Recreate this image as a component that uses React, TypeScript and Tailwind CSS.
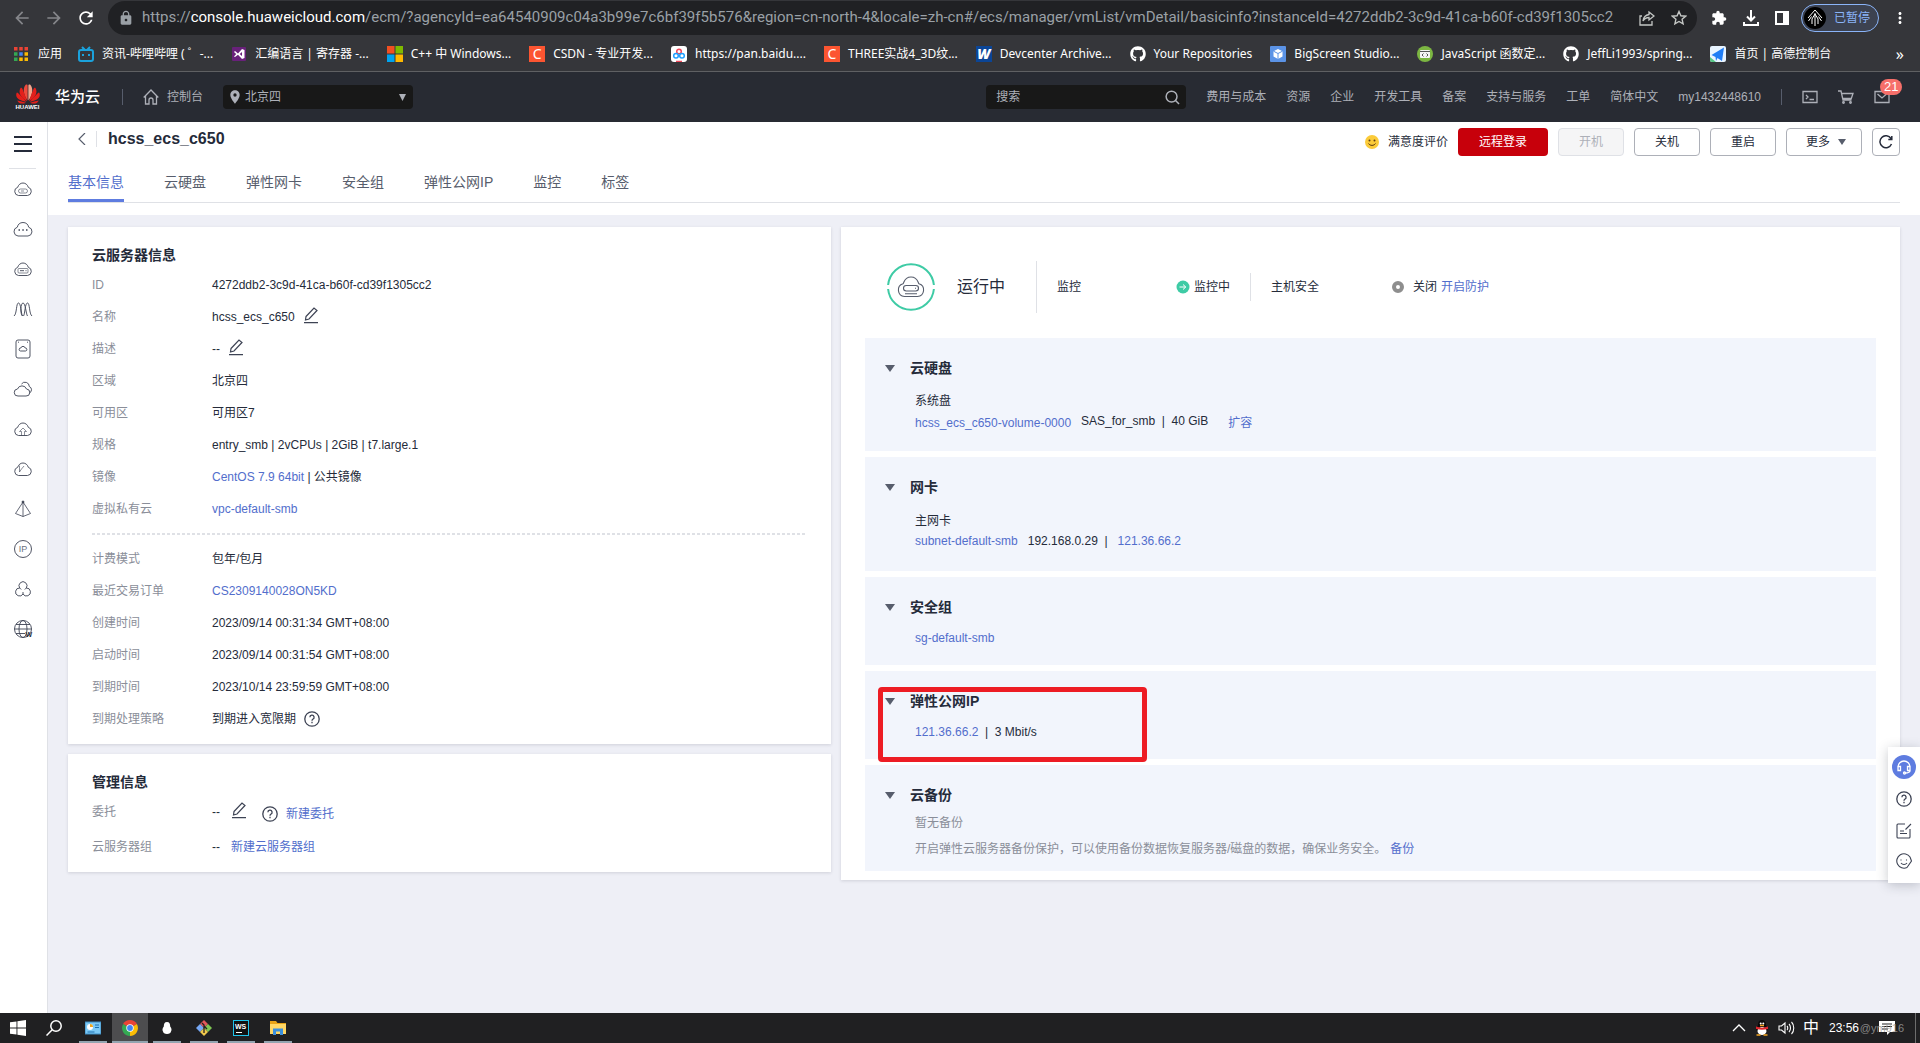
import type { ReactNode } from 'react';
import { FaGithub } from 'react-icons/fa';
import {
  MdArrowBack,
  MdArrowForward,
  MdExtension,
  MdLocationOn,
  MdLock,
  MdMoreVert,
  MdRefresh,
} from 'react-icons/md';

type Bookmark = {
  label: string;
  icon: ReactNode;
};

type InfoRow = {
  label: string;
  value: ReactNode;
};

const TABS = ['基本信息', '云硬盘', '弹性网卡', '安全组', '弹性公网IP', '监控', '标签'];

const TOP_LINKS = [
  '费用与成本',
  '资源',
  '企业',
  '开发工具',
  '备案',
  '支持与服务',
  '工单',
  '简体中文',
];

const CLOUD = 'M5.5 16.500a4.200 4.200 0 0 1-.8-8.200C5.400 5.800 7.500 4 10 4s4.600 1.800 5.300 4.300a4.200 4.200 0 0 1-.8 8.200z';

function Link({ children }: { children: ReactNode }) {
  return (
    <a href="#" className="text-[#526ecc]">
      {children}
    </a>
  );
}

function CsdnIcon() {
  return (
    <span className="flex h-4 w-4 items-center justify-center bg-[#fc5531] text-sm leading-4 text-white">
      C
    </span>
  );
}

const BOOKMARKS: Bookmark[] = [
  {
    label: '资讯-哔哩哔哩 ( ゜-...',
    icon: (
      <svg viewBox="0 0 16 16" className="h-4 w-4" fill="none" stroke="#1ba2dc" strokeWidth="2">
        <rect x="1" y="4" width="14" height="11" rx="2" />
        <path d="M4 1l3 3M12 1L9 4M5 8v2M11 8v2" />
      </svg>
    ),
  },
  {
    label: '汇编语言 | 寄存器 -...',
    icon: (
      <svg viewBox="0 0 16 16" className="h-4 w-4">
        <rect x="1" y="1" width="14" height="14" rx="1" fill="#68217a" />
        <path
          d="M3 6l1-1 3 2.500L11 3l2.500 1v8L11 13 7 8.800 4 11 3 10.500 5.200 8zM11 6L8.700 8 11 10z"
          fill="#fff"
          fillRule="evenodd"
        />
      </svg>
    ),
  },
  {
    label: 'C++ 中 Windows...',
    icon: (
      <svg viewBox="0 0 16 16" className="h-4 w-4">
        <path d="M0 0h7.500v7.500H0z" fill="#f25022" />
        <path d="M8.500 0H16v7.500H8.500z" fill="#7fba00" />
        <path d="M0 8.500h7.500V16H0z" fill="#00a4ef" />
        <path d="M8.500 8.500H16V16H8.500z" fill="#ffb900" />
      </svg>
    ),
  },
  { label: 'CSDN - 专业开发...', icon: <CsdnIcon /> },
  {
    label: 'https://pan.baidu....',
    icon: (
      <svg viewBox="0 0 16 16" className="h-4 w-4" fill="none" strokeWidth="1.5">
        <rect width="16" height="16" rx="3" fill="#fff" />
        <circle cx="8" cy="5.5" r="2.3" stroke="#f0475a" />
        <circle cx="5" cy="9.8" r="2.3" stroke="#1e9fff" />
        <circle cx="11" cy="9.8" r="2.3" stroke="#1e9fff" />
        <path d="M5 15.500h6" stroke="#f0475a" />
      </svg>
    ),
  },
  { label: 'THREE实战4_3D纹...', icon: <CsdnIcon /> },
  {
    label: 'Devcenter Archive...',
    icon: (
      <span className="flex h-4 w-4 items-center justify-center bg-[#0b4596] text-sm leading-4 font-black text-white italic">
        W
      </span>
    ),
  },
  { label: 'Your Repositories', icon: <FaGithub className="h-4 w-4" /> },
  {
    label: 'BigScreen Studio...',
    icon: (
      <svg viewBox="0 0 16 16" className="h-4 w-4">
        <rect width="16" height="16" rx="1" fill="#5b93e6" />
        <path d="M8 3l4.500 2.200v5.300L8 13l-4.500-2.500V5.200z" fill="#fff" />
        <path d="M3.500 5.200L8 7.500l4.500-2.300M8 7.500V13" stroke="#5b93e6" fill="none" />
      </svg>
    ),
  },
  {
    label: 'JavaScript 函数定...',
    icon: (
      <svg viewBox="0 0 16 16" className="h-4 w-4">
        <circle cx="8" cy="8" r="8" fill="#7cb642" />
        <rect x="3" y="4" width="10" height="8" rx="1" fill="#f4f4f4" />
        <path d="M3 5.500h10" stroke="#555" />
        <path d="M6.500 7.500L5 9l1.500 1.500M9.500 7.500L11 9l-1.500 1.500" stroke="#555" fill="none" />
      </svg>
    ),
  },
  { label: 'JeffLi1993/spring...', icon: <FaGithub className="h-4 w-4" /> },
  {
    label: '首页 | 高德控制台',
    icon: (
      <svg viewBox="0 0 16 16" className="h-4 w-4">
        <rect width="16" height="16" rx="2" fill="#e8f4ff" />
        <path d="M0 11l6 5H2a2 2 0 0 1-2-2z" fill="#57c785" />
        <path d="M14 1.500L12 15l-4.500-3L6 15l-.5-4L1.500 9z" fill="#1f7df5" />
      </svg>
    ),
  },
];

function BrowserBar() {
  return (
    <div className="bg-[#35363a] font-['Noto_Sans','Noto_Sans_CJK_SC',sans-serif] text-white">
      <div className="flex h-9 items-center pr-[15px] pl-3">
        <div className="flex w-24 shrink-0 items-center gap-3 text-[20px]">
          <button aria-label="后退" className="text-[#85868a]">
            <MdArrowBack />
          </button>
          <button aria-label="前进" className="text-[#85868a]">
            <MdArrowForward />
          </button>
          <button aria-label="刷新">
            <MdRefresh />
          </button>
        </div>
        <div className="flex h-[34px] min-w-0 flex-1 items-center gap-2 rounded-full bg-[#202124] px-2.5">
          <MdLock className="shrink-0 text-base text-[#9aa0a6]" />
          <p className="min-w-0 flex-1 truncate font-[Roboto] text-[15px] text-[#9aa0a6]">
            https://<span className="text-white">console.huaweicloud.com</span>
            /ecm/?agencyId=ea64540909c04a3b99e7c6bf39f5b576&amp;region=cn-north-4&amp;locale=zh-cn#/ecs/manager/vmList/vmDetail/basicinfo?instanceId=4272ddb2-3c9d-41ca-b60f-cd39f1305cc2
          </p>
          <button aria-label="分享" className="mr-2">
            <svg viewBox="0 0 16 16" className="h-4 w-4" fill="none" stroke="#c4c7c5" strokeWidth="1.3">
              <path d="M3 6H1v9h12v-4M10 2l5 4-5 4V7.500c-3 0-4.500 1-6 3.500.5-4 2.500-6 6-6.500z" />
            </svg>
          </button>
          <button aria-label="收藏">
            <svg viewBox="0 0 16 16" className="h-4 w-4" fill="none" stroke="#c4c7c5" strokeWidth="1.4">
              <path d="M8 1.500l1.900 4.300 4.700.4-3.500 3.100 1 4.600L8 11.500l-4.100 2.400 1-4.600L1.400 6.200l4.700-.4z" />
            </svg>
          </button>
        </div>
        <div className="flex shrink-0 items-center gap-4 pl-3.5">
          <button aria-label="扩展程序" className="text-base">
            <MdExtension />
          </button>
          <button aria-label="下载">
            <svg viewBox="0 0 16 16" className="h-4 w-4" fill="none" stroke="#fff" strokeWidth="2">
              <path d="M8 0v10M4 6.500l4 4 4-4M1 12v3h14v-3" />
            </svg>
          </button>
          <button aria-label="侧边栏">
            <svg viewBox="0 0 14 14" className="h-3.5 w-3.5" fill="#fff">
              <path d="M0 0h14v14H0zM2 2v10h6V2z" fillRule="evenodd" />
            </svg>
          </button>
          <button className="-ml-1 flex h-7 items-center gap-2 rounded-full border border-[#8ab4f8] bg-[#3c4250] pr-2 pl-0.5 text-xs text-[#8ab4f8]">
            <svg viewBox="0 0 22 22" className="h-[22px] w-[22px]" fill="none" stroke="#fff" strokeWidth="1">
              <circle cx="11" cy="11" r="11" fill="#000" stroke="none" />
              <path d="M11 3l7 8M11 3l-7 8M11 6v13M11 7l-3 5v5M11 7l3 5v5M7.500 9.500L4.500 14M14.500 9.500l3 4.500" />
            </svg>
            已暂停
          </button>
          <button aria-label="更多选项" className="-mr-1 -ml-1 text-lg">
            <MdMoreVert />
          </button>
        </div>
      </div>
      <nav className="flex h-9 items-center border-b border-[#5f6063] pr-4 pl-3.5 text-xs whitespace-nowrap">
        <a href="#" className="mr-4 flex items-center gap-2.5">
          <svg viewBox="0 0 14 14" className="h-3.5 w-3.5">
            <path d="M0 0h3.500v3.500H0zM5.250 0h3.500v3.500h-3.500zM10.500 0H14v3.500h-3.500z" fill="#ea4335" />
            <path d="M0 5.250h3.500v3.500H0zM0 10.500h3.500V14H0z" fill="#34a853" />
            <path d="M5.250 5.250h3.500v3.500h-3.500z" fill="#4285f4" />
            <path d="M10.500 5.250H14v3.500h-3.500zM5.250 10.500h3.500V14h-3.500zM10.500 10.500H14V14h-3.500z" fill="#fbbc04" />
          </svg>
          应用
        </a>
        <div className="flex gap-[18px]">
          {BOOKMARKS.map((b) => (
            <a key={b.label} href="#" className="flex items-center gap-2">
              <span className="shrink-0">{b.icon}</span>
              {b.label}
            </a>
          ))}
        </div>
        <button className="ml-auto text-base">»</button>
      </nav>
    </div>
  );
}

function HuaweiLogo() {
  return (
    <svg viewBox="0 0 52 40" className="h-5 w-[26px]" fill="#e3201b">
      <path d="M25.300 33C17 23 15 9 21 2c2-1.500 4.300-1 4.300 2z" fill="#ee4a3c" />
      <path d="M26.700 33C35 23 37 9 31 2c-2-1.500-4.300-1-4.300 2z" fill="#f5a58c" />
      <path d="M24 34.500C11 27 6 17 11 8c1-1.500 3-.5 4 2 3 7 6 15 9 24.500z" />
      <path d="M28 34.500C41 27 46 17 41 8c-1-1.500-3-.5-4 2-3 7-6 15-9 24.500z" />
      <path d="M22.500 35.500C8 33.500 0 27 3 18c.5-1.500 2-1.300 3 0 5 5 11 11 16.500 17.500z" />
      <path d="M29.500 35.500C44 33.500 52 27 49 18c-.5-1.500-2-1.300-3 0-5 5-11 11-16.500 17.500z" />
      <path d="M22 37.500c-7 3-14 2.500-17.500-4.500 6 1.500 12 2.500 17.500 4.500z" />
      <path d="M30 37.500c7 3 14 2.500 17.500-4.500-6 1.500-12 2.500-17.500 4.500z" />
    </svg>
  );
}

function ConsoleHeader() {
  return (
    <header className="flex h-[50px] items-center bg-[#282b33] pr-[30px] pl-3.5 text-xs whitespace-nowrap text-[#adb0b8]">
      <a href="#" className="flex w-[27px] flex-col items-center">
        <HuaweiLogo />
        <span className="text-[6px] leading-[7px] font-bold text-white">HUAWEI</span>
      </a>
      <span className="ml-3.5 text-[15px] font-medium text-white">华为云</span>
      <span className="ml-[22px] h-4 w-px bg-[#575d6c]" />
      <a href="#" className="ml-5 flex items-center gap-2">
        <svg viewBox="0 0 16 16" className="h-4 w-4" fill="none" stroke="#adb0b8" strokeWidth="1.3">
          <path d="M.7 8.500L8 1l7.300 7.500M2.500 7v8H6v-4a2 2 0 0 1 4 0v4h3.500V7" />
        </svg>
        控制台
      </a>
      <div className="relative ml-5 flex h-6 w-[190px] items-center rounded-sm bg-[#181818]">
        <MdLocationOn className="absolute left-1 text-base" />
        <select aria-label="区域" className="h-full w-full appearance-none pl-[22px] outline-none">
          <option>北京四</option>
        </select>
        <svg viewBox="0 0 8 8" className="pointer-events-none absolute right-[7px] h-[7px] w-[7px]" fill="#adb0b8">
          <path d="M0 0h8L4 8z" />
        </svg>
      </div>
      <div className="ml-auto flex h-6 w-[200px] items-center rounded-sm bg-[#181818] pr-1.5 pl-2.5">
        <input
          aria-label="搜索"
          placeholder="搜索"
          className="min-w-0 flex-1 outline-none placeholder:text-[#adb0b8]"
        />
        <svg viewBox="0 0 16 16" className="h-[15px] w-[15px]" fill="none" stroke="#adb0b8" strokeWidth="1.6">
          <circle cx="7" cy="7" r="5.8" />
          <path d="M11 11l4 4" />
        </svg>
      </div>
      <nav className="ml-5 flex items-center gap-5">
        {TOP_LINKS.map((l) => (
          <a key={l} href="#">
            {l}
          </a>
        ))}
        <a href="#">my1432448610</a>
      </nav>
      <span className="ml-5 h-4 w-px bg-[#575d6c]" />
      <div className="ml-5 flex items-center gap-5">
        <button aria-label="命令行">
          <svg viewBox="0 0 16 16" className="h-4 w-4" fill="none" stroke="#adb0b8" strokeWidth="1.3">
            <path d="M1 2.500h14v11H1zM4 6l2 2-2 2M7.500 10.500H12" />
          </svg>
        </button>
        <button aria-label="购物车">
          <svg viewBox="0 0 16 16" className="h-4 w-4" fill="none" stroke="#adb0b8" strokeWidth="1.3">
            <path d="M0 2h3l2 9h8.500M3.700 4.500H15l-1.700 5H5" />
            <circle cx="5.5" cy="13.5" r=".8" />
            <circle cx="12.5" cy="13.5" r=".8" />
          </svg>
        </button>
        <button aria-label="消息" className="relative">
          <svg viewBox="0 0 16 16" className="h-4 w-4" fill="none" stroke="#adb0b8" strokeWidth="1.3">
            <path d="M1 2.500h14v11H1zM3.500 5L8 9l4.500-4" />
          </svg>
          <span className="absolute -top-2.5 left-1.5 rounded-full bg-[#f66f6a] px-1 text-[13px] leading-4 text-white">
            21
          </span>
        </button>
      </div>
    </header>
  );
}

const SIDE_ICONS: ReactNode[] = [
  <>
    <path d={CLOUD} />
    <rect x="5.5" y="10" width="9" height="4" rx="2" strokeWidth=".6" />
    <path d="M8 12h3" strokeWidth=".6" />
  </>,
  <>
    <path d="M5 17a4.500 4.500 0 0 1-.7-8.800A6 6 0 0 1 10 3.500a6 6 0 0 1 5.700 4.700A4.500 4.500 0 0 1 15 17z" />
    <path d="M5.500 11h1.500M9.300 11h1.500M13 11h1.500" strokeWidth="1.5" />
  </>,
  <>
    <path d={CLOUD} />
    <rect x="5" y="9.500" width="10" height="4.500" rx="1" strokeWidth=".6" />
    <path d="M7 11.700h4M12.500 11.700h1" />
  </>,
  <path d="M1 17C4 15 3 4 5.500 4S8 15 9.500 17C7 15 7.500 4 10 4s3 11 4.500 13M19 17c-3-2-2-13-4.500-13S12 15 10.500 17" />,
  <>
    <rect x="3" y="1" width="14" height="18" rx="2" />
    <path d="M7.500 12a1.500 1.500 0 0 1 .3-3 2.300 2.300 0 0 1 4.400 0 1.500 1.500 0 0 1 .3 3zM5 3.200h1M14 3.200h1" />
  </>,
  <>
    <path d="M5 17a3.500 3.500 0 0 1-.5-7 4.800 4.800 0 0 1 9 0 3.500 3.500 0 0 1-.5 7z" />
    <path d="M8.500 5a4.300 4.300 0 0 1 7.800 2.500 3.500 3.500 0 0 1 0 6.500" />
  </>,
  <>
    <path d={CLOUD} />
    <path d="M8.500 16.500v-4h-2L10 9l3.500 3.500h-2v4" strokeWidth=".6" />
  </>,
  <>
    <path d={CLOUD} />
    <path d="M6.500 6.500v6.500l2-3 2.500-3" strokeWidth=".6" />
  </>,
  <>
    <path d="M10 3L2.500 14.500 10 17.500l7.500-3zM10 3v14.500" strokeWidth=".8" />
    <circle cx="10" cy="3" r="1" fill="#3d4354" />
  </>,
  <>
    <circle cx="10" cy="10" r="8.5" />
    <text x="10" y="13" fontSize="9" textAnchor="middle" fill="#6b7080" stroke="none">
      IP
    </text>
  </>,
  <path d="M6.700 9a4 4 0 1 1 6.600 0M6.700 9a4 4 0 1 0 3.300 6 4 4 0 1 0 3.300-6M10 15v-2M8.200 10.500L6.700 9M11.800 10.500l1.500-1.500" />,
  <>
    <circle cx="10" cy="10" r="8.5" />
    <ellipse cx="10" cy="10" rx="4" ry="8.5" />
    <path d="M1.500 10h17M3 5.500h14M3 14.500h9" />
    <text x="12.5" y="18" fontSize="7" fontWeight="700" fill="#252b3a" stroke="none">
      W
    </text>
  </>,
];

function SideNav() {
  return (
    <nav className="flex w-12 shrink-0 flex-col items-center border-r border-[#dfe1e6] bg-white pr-0.5">
      <button aria-label="菜单" className="mt-3.5 flex w-[18px] flex-col gap-[5px]">
        <span className="h-0.5 bg-[#252b3a]" />
        <span className="h-0.5 bg-[#252b3a]" />
        <span className="h-0.5 bg-[#252b3a]" />
      </button>
      <span className="mt-4 mb-2.5 h-px w-[27px] bg-[#dfe1e6]" />
      <div className="flex flex-col gap-5">
        {SIDE_ICONS.map((icon, i) => (
          <a key={i} href="#" aria-label={`服务 ${i + 1}`}>
            <svg viewBox="0 0 20 20" className="h-5 w-5" fill="none" stroke="#3d4354" strokeWidth=".9">
              {icon}
            </svg>
          </a>
        ))}
      </div>
    </nav>
  );
}

const OUTLINE_BUTTON = 'h-7 w-[66px] rounded-sm border border-[#adb0b8] bg-white text-[#252b3a]';

function PageHeader() {
  return (
    <div className="bg-white pb-3 pl-5">
      <div className="flex h-[34px] items-start justify-between pr-5">
        <div className="flex h-full items-center">
          <button aria-label="返回" className="ml-2">
            <svg viewBox="0 0 12 12" className="h-3 w-3" fill="none" stroke="#575d6c" strokeWidth="1.2">
              <path d="M9 0L3 6l6 6" />
            </svg>
          </button>
          <span className="ml-2 h-4 w-px bg-[#dfe1e6]" />
          <h1 className="ml-[11px] text-base font-bold">hcss_ecs_c650</h1>
        </div>
        <div className="flex items-center gap-2.5 pt-1.5">
          <a href="#" className="flex items-center gap-2">
            <svg viewBox="0 0 16 16" className="h-4 w-4">
              <circle cx="8" cy="8" r="7" fill="#fbcb3a" />
              <circle cx="5.5" cy="6.5" r="1" fill="#5d3b12" />
              <circle cx="10.5" cy="6.5" r="1" fill="#5d3b12" />
              <path d="M4.500 9.500c1.500 2.500 5.500 2.500 7 0" stroke="#5d3b12" fill="none" />
            </svg>
            满意度评价
          </a>
          <button className="h-7 w-[90px] rounded-sm bg-[#c7000b] text-white">远程登录</button>
          <button disabled className="h-7 w-[66px] rounded-sm border border-[#dfe1e6] bg-[#f5f5f6] text-[#adb0b8]">
            开机
          </button>
          <button className={OUTLINE_BUTTON}>关机</button>
          <button className={OUTLINE_BUTTON}>重启</button>
          <button className="flex h-7 w-[76px] items-center justify-center gap-2 rounded-sm border border-[#adb0b8] pl-1">
            更多
            <svg viewBox="0 0 8 6" className="h-1.5 w-2" fill="#575d6c">
              <path d="M0 0h8L4 6z" />
            </svg>
          </button>
          <button
            aria-label="刷新"
            className="flex h-7 w-7 items-center justify-center rounded-sm border border-[#adb0b8]"
          >
            <svg viewBox="0 0 14 14" className="h-3.5 w-3.5" fill="none" stroke="#252b3a" strokeWidth="1.5">
              <path d="M12.500 9A6 6 0 1 1 12 3.500M12.800 1v3.500H9.300" />
            </svg>
          </button>
        </div>
      </div>
      <div className="mt-2.5 mr-5 flex gap-10 border-b border-[#dfe1e6] text-sm text-[#575d6c]">
        {TABS.map((tab, i) => (
          <a
            key={tab}
            href="#"
            className={
              i === 0
                ? 'border-b-[3px] border-[#5e7ce0] pt-1 pb-[5px] leading-6 text-[#526ecc]'
                : 'pt-1 pb-[5px] leading-6'
            }
          >
            {tab}
          </a>
        ))}
      </div>
    </div>
  );
}

function EditIcon() {
  return (
    <button aria-label="编辑">
      <svg viewBox="0 0 16 20" className="h-5 w-4" fill="none" stroke="#3d4354" strokeWidth="1.2">
        <path d="M3 9.500L11 1l3 2.500L6 12l-3.500 1zM1 15.700h14" />
      </svg>
    </button>
  );
}

function HelpIcon() {
  return (
    <svg viewBox="0 0 16 16" className="h-4 w-4 shrink-0" fill="none" stroke="#3d4354" strokeWidth="1.3">
      <circle cx="8" cy="8" r="7.2" />
      <path d="M5.900 6.300a2.100 2.100 0 1 1 3 1.900c-.7.400-.9.700-.9 1.500M8 10.800v1.400" />
    </svg>
  );
}

const SERVER_ROWS: InfoRow[] = [
  { label: 'ID', value: '4272ddb2-3c9d-41ca-b60f-cd39f1305cc2' },
  { label: '名称', value: <>hcss_ecs_c650 <EditIcon /></> },
  { label: '描述', value: <>-- <EditIcon /></> },
  { label: '区域', value: '北京四' },
  { label: '可用区', value: '可用区7' },
  { label: '规格', value: 'entry_smb | 2vCPUs | 2GiB | t7.large.1' },
  {
    label: '镜像',
    value: (
      <span>
        <Link>CentOS 7.9 64bit</Link> | 公共镜像
      </span>
    ),
  },
  { label: '虚拟私有云', value: <Link>vpc-default-smb</Link> },
];

const BILLING_ROWS: InfoRow[] = [
  { label: '计费模式', value: '包年/包月' },
  { label: '最近交易订单', value: <Link>CS2309140028ON5KD</Link> },
  { label: '创建时间', value: '2023/09/14 00:31:34 GMT+08:00' },
  { label: '启动时间', value: '2023/09/14 00:31:54 GMT+08:00' },
  { label: '到期时间', value: '2023/10/14 23:59:59 GMT+08:00' },
  { label: '到期处理策略', value: <>到期进入宽限期 <HelpIcon /></> },
];

const MANAGE_ROWS: InfoRow[] = [
  {
    label: '委托',
    value: (
      <>
        -- <EditIcon />
        <span className="ml-1 flex items-center gap-2 pt-1">
          <HelpIcon />
          <Link>新建委托</Link>
        </span>
      </>
    ),
  },
  { label: '云服务器组', value: <>-- <Link>新建云服务器组</Link></> },
];

function InfoList({ rows, loose = false }: { rows: InfoRow[]; loose?: boolean }) {
  return (
    <dl className={loose ? 'flex flex-col gap-[3px]' : 'flex flex-col'}>
      {rows.map((row) => (
        <div key={row.label} className="flex h-8 items-center">
          <dt className="w-[120px] shrink-0 text-[#8a8e99]">{row.label}</dt>
          <dd className={loose ? 'flex items-center gap-[11px]' : 'flex items-center gap-2'}>
            {row.value}
          </dd>
        </div>
      ))}
    </dl>
  );
}

function Section({
  title,
  bodyClass = 'pt-[11px] pb-[17px]',
  children,
}: {
  title: string;
  bodyClass?: string;
  children: ReactNode;
}) {
  return (
    <section className="relative bg-[#f2f5fc] px-5 pt-5">
      <h3 className="flex items-center gap-[15px] text-sm leading-5 font-bold">
        <svg viewBox="0 0 10 7" className="h-[7px] w-2.5" fill="#575d6c">
          <path d="M0 0h10L5 7z" />
        </svg>
        {title}
      </h3>
      <div className={`pl-[30px] leading-5 ${bodyClass}`}>{children}</div>
    </section>
  );
}

function StatusBar() {
  return (
    <div className="flex h-[103px] items-center">
      <svg viewBox="0 0 48 48" className="ml-[22px] h-12 w-12" fill="none" strokeWidth="2">
        <path d="M1.100 22a23 23 0 0 1 45.800 0M1.100 26a23 23 0 0 0 45.800 0" stroke="#3ecba5" />
        <g stroke="#575d6c" strokeWidth="1.1">
          <path d="M17.500 33.500a6.500 6.500 0 0 1-1.500-12.700c1.200-1 1-6.800 8-6.800s6.800 5.800 8 6.800a6.500 6.500 0 0 1-1.500 12.700z" />
          <rect x="16.5" y="22.5" width="15" height="5.5" rx="2.7" />
          <path d="M18 30.700h12M28 25.200h1" />
        </g>
      </svg>
      <span className="ml-[22px] text-base">运行中</span>
      <span className="ml-[31px] h-[52px] w-px bg-[#dfe1e6]" />
      <span className="ml-5 w-[119px]">监控</span>
      <span className="flex items-center gap-1">
        <svg viewBox="0 0 14 14" className="h-3.5 w-3.5">
          <circle cx="7" cy="7" r="6.5" fill="#3ecba5" />
          <path d="M3.500 7h6M7 4.500L9.800 7 7 9.500" stroke="#fff" fill="none" />
        </svg>
        监控中
      </span>
      <span className="ml-5 h-7 w-px bg-[#dfe1e6]" />
      <span className="ml-5 w-[120px]">主机安全</span>
      <svg viewBox="0 0 14 14" className="h-3.5 w-3.5">
        <circle cx="7" cy="7" r="4" stroke="#8e8e8e" strokeWidth="4" fill="#fff" />
      </svg>
      <span className="ml-2 flex gap-1">
        关闭 <Link>开启防护</Link>
      </span>
    </div>
  );
}

const CARD = 'bg-white shadow-[0_1px_3px_rgba(37,43,58,0.15)]';

function Detail() {
  return (
    <div className="grid flex-1 grid-cols-[763fr_1059fr] items-start gap-2.5 bg-[#eeeff6] px-5 py-3">
      <div className="flex flex-col gap-2.5">
        <section className={`${CARD} px-6 pt-4 pb-[9px]`}>
          <h2 className="mb-0.5 text-sm leading-6 font-bold">云服务器信息</h2>
          <InfoList rows={SERVER_ROWS} />
          <hr className="my-2 h-0.5 border-0 bg-[repeating-linear-gradient(90deg,#dfe1e6_0_3px,transparent_3px_5px)]" />
          <InfoList rows={BILLING_ROWS} />
        </section>
        <section className={`${CARD} px-6 pt-4 pb-[9px]`}>
          <h2 className="mb-0.5 text-sm leading-6 font-bold">管理信息</h2>
          <InfoList rows={MANAGE_ROWS} loose />
        </section>
      </div>
      <div className={`${CARD} px-6 pt-2 pb-[9px]`}>
        <StatusBar />
        <div className="flex flex-col gap-1.5">
          <Section title="云硬盘" bodyClass="pt-[13px] pb-[18px]">
            <p>系统盘</p>
            <p className="flex items-end gap-2.5">
              <span className="pt-0.5">
                <Link>hcss_ecs_c650-volume-0000</Link>
              </span>
              <span className="self-start">SAS_for_smb&nbsp; |&nbsp; 40 GiB</span>
              <span className="pl-2.5">
                <Link>扩容</Link>
              </span>
            </p>
          </Section>
          <Section title="网卡" bodyClass="pt-3.5 pb-5">
            <p>主网卡</p>
            <p className="flex gap-2.5">
              <Link>subnet-default-smb</Link>
              <span>192.168.0.29&nbsp; |</span>
              <Link>121.36.66.2</Link>
            </p>
          </Section>
          <Section title="安全组">
            <Link>sg-default-smb</Link>
          </Section>
          <Section title="弹性公网IP">
            <p>
              <Link>121.36.66.2</Link>&nbsp; |&nbsp; 3 Mbit/s
            </p>
            <div className="pointer-events-none absolute top-4 left-[13px] h-[75px] w-[269px] rounded-sm border-[5px] border-[#ed1c24]" />
          </Section>
          <Section title="云备份" bodyClass="pt-2 pb-3">
            <div className="flex flex-col gap-1.5 text-[#8a8e99]">
              <p>暂无备份</p>
              <p className="flex gap-1">
                开启弹性云服务器备份保护，可以使用备份数据恢复服务器/磁盘的数据，确保业务安全。
                <Link>备份</Link>
              </p>
            </div>
          </Section>
        </div>
      </div>
    </div>
  );
}

function HelpDock() {
  return (
    <aside className="fixed right-0 bottom-40 flex h-[136px] w-8 flex-col items-center bg-white pt-2 shadow-[0_2px_12px_rgba(37,43,58,0.25)]">
      <button aria-label="客服" className="flex h-6 w-6 items-center justify-center rounded-full bg-[#5e7ce0]">
        <svg viewBox="0 0 16 16" className="h-4 w-4" fill="none" stroke="#fff" strokeWidth="1.3">
          <path d="M2 8a6 6 0 0 1 12 0M2 7.500h2.500v4H2zM11.500 7.500H14v4h-2.500zM14 11.500c0 2-2 2.500-5 2.500" />
          <circle cx="8.5" cy="14" r="1" />
        </svg>
      </button>
      <button aria-label="帮助" className="mt-3">
        <HelpIcon />
      </button>
      <button aria-label="建议" className="mt-4">
        <svg viewBox="0 0 16 16" className="h-4 w-4" fill="none" stroke="#3d4354" strokeWidth="1.1">
          <path d="M9 1H2a1 1 0 0 0-1 1v12a1 1 0 0 0 1 1h11a1 1 0 0 0 1-1V6M15 1L9.500 6.500M4 8h4M4 10.500h7" />
        </svg>
      </button>
      <button aria-label="评价" className="mt-3.5">
        <svg viewBox="0 0 16 16" className="h-4 w-4" fill="none" stroke="#3d4354" strokeWidth="1.1">
          <path d="M11 14.500A7.200 7.200 0 1 1 14 4M11 14.500L15.500 8 14 4M5 6.500v1M10.500 6.500v1M5 10c1.500 2 4.500 2 6 0" />
        </svg>
      </button>
    </aside>
  );
}

const TASKS: { name: string; active: boolean; icon: ReactNode }[] = [
  {
    name: '控制面板',
    active: false,
    icon: (
      <>
        <rect x="0" y="2" width="16" height="12" fill="#7cc9f5" stroke="#3a8ac0" />
        <circle cx="5" cy="7" r="3" fill="#fff" />
        <path d="M5 7V4a3 3 0 0 1 3 3z" fill="#f2a516" />
        <path d="M10 5h4M10 7.500h4M2.500 12h7" stroke="#1c6fae" />
      </>
    ),
  },
  {
    name: 'Chrome',
    active: true,
    icon: (
      <>
        <path d="M8 8L1.100 4A8 8 0 0 1 14.900 4z" fill="#ea4335" />
        <path d="M8 8l6.900-4A8 8 0 0 1 8 16z" fill="#fbbc04" />
        <path d="M8 8v8A8 8 0 0 1 1.100 4z" fill="#34a853" />
        <circle cx="8" cy="8" r="3.7" fill="#fff" />
        <circle cx="8" cy="8" r="2.9" fill="#4285f4" />
      </>
    ),
  },
  {
    name: 'QQ',
    active: false,
    icon: (
      <path
        d="M8 2c2.500 0 3.200 2 3.200 4.500C12.500 8 13 10 12 11.500c-.3 1.500-1.500 2.500-4 2.500s-3.700-1-4-2.500C3 10 3.500 8 4.800 6.500 4.800 4 5.500 2 8 2z"
        fill="#fff"
      />
    ),
  },
  {
    name: 'Git',
    active: false,
    icon: (
      <>
        <path d="M8 0l4 4-4 4-4-4z" fill="#e2575a" />
        <path d="M4 4l4 4-4 4-4-4z" fill="#76a8f5" />
        <path d="M12 4l4 4-4 4-4-4z" fill="#7fc553" />
        <path d="M8 8l4 4-4 4-4-4z" fill="#f2c94c" />
        <path d="M6 3l2 2v8M8 6l3 3" stroke="#222" strokeWidth="1.3" fill="none" />
      </>
    ),
  },
  {
    name: 'WebStorm',
    active: false,
    icon: (
      <>
        <rect x=".5" y=".5" width="15" height="15" fill="#111" stroke="#1fc3ea" />
        <text x="2" y="9" fontSize="7" fontWeight="700" fill="#fff">
          WS
        </text>
        <path d="M3 12.500h6" stroke="#fff" />
      </>
    ),
  },
  {
    name: '文件资源管理器',
    active: false,
    icon: (
      <>
        <path d="M0 1h6l1.500 2H16v11H0z" fill="#e8a317" />
        <path d="M0 4h16v10H0z" fill="#ffd766" />
        <path d="M3 15V8.500h10V15h-3v-3.500H6V15z" fill="#3b8fdd" />
      </>
    ),
  },
];

function Taskbar() {
  return (
    <footer className="flex h-[30px] items-stretch bg-[#202022] text-white">
      <button aria-label="开始" className="flex w-9 items-center justify-center">
        <svg viewBox="0 0 16 16" className="h-4 w-4" fill="#fff">
          <path d="M0 2.300L6.500 1.400v6.100H0zM7.400 1.300L16 0v7.500H7.400zM0 8.400h6.500v6.200L0 13.700zM7.400 8.400H16V16l-8.600-1.200z" />
        </svg>
      </button>
      <button aria-label="搜索" className="flex w-9 items-center justify-center">
        <svg viewBox="0 0 16 16" className="h-4 w-4" fill="none" stroke="#fff" strokeWidth="1.5">
          <circle cx="10" cy="6" r="5.2" />
          <path d="M6.200 9.800L.5 15.500" />
        </svg>
      </button>
      <div className="ml-[3px] flex gap-px">
        {TASKS.map((t) => (
          <button
            key={t.name}
            aria-label={t.name}
            className={
              t.active
                ? 'flex w-9 flex-col items-center bg-[#4d4d4f]'
                : 'flex w-9 flex-col items-center px-1'
            }
          >
            <svg viewBox="0 0 16 16" className="mt-[7px] h-4 w-4">
              {t.icon}
            </svg>
            <span className="mt-auto h-0.5 w-full bg-[#93a4b0]" />
          </button>
        ))}
      </div>
      <div className="relative ml-auto flex items-center gap-2 pr-1">
        <svg viewBox="0 0 14 14" className="h-3.5 w-3.5" fill="none" stroke="#fff" strokeWidth="1.3">
          <path d="M1 10l6-6 6 6" />
        </svg>
        <svg viewBox="0 0 16 16" className="h-4 w-4">
          <path d="M8 0c3 0 4 2.500 4 5l2 4-1 2H3L2 9l2-4c0-2.500 1-5 4-5z" fill="#0a0a0a" />
          <ellipse cx="8" cy="11" rx="4.5" ry="4" fill="#fff" />
          <circle cx="6.7" cy="3.5" r="1" fill="#fff" />
          <circle cx="9.3" cy="3.5" r="1" fill="#fff" />
          <path d="M2 6.500c4 1.500 8 1.500 12 0v2.500c-4 1-8 1-12 0z" fill="#e0262c" />
          <path d="M6 5.500h4M2.500 15h4M9.500 15h4" stroke="#f5a623" strokeWidth="1.5" />
        </svg>
        <svg viewBox="0 0 17 16" className="h-4 w-[17px]" fill="none" stroke="#fff" strokeWidth="1.1">
          <path d="M1 6h2.500L7 3v10L3.500 10H1zM9 6c1 1 1 3 0 4M11 4c2 2 2 6 0 8M13.500 2c3 3 3 9 0 12" />
        </svg>
        <span className="text-base">中</span>
        <time className="ml-0.5 w-8 text-xs">23:56</time>
        <svg viewBox="0 0 16 16" className="mr-3 ml-2.5 h-4 w-4">
          <path d="M0 1h16v11H11l-3 3v-3H0z" fill="#fff" />
          <path d="M3 4h10M3 6.500h10M3 9h6" stroke="#202022" />
        </svg>
        <span className="absolute right-4 text-[11px] text-[#a0a0a0]/80">@ym916</span>
        <span className="h-full w-px bg-[#6d6d6d]" />
      </div>
    </footer>
  );
}

export default function App() {
  return (
    <div className="flex min-h-screen flex-col font-['Liberation_Sans','Noto_Sans_CJK_SC',sans-serif] text-xs text-[#252b3a]">
      <BrowserBar />
      <ConsoleHeader />
      <main className="flex flex-1">
        <SideNav />
        <div className="flex min-w-0 flex-1 flex-col">
          <PageHeader />
          <Detail />
        </div>
      </main>
      <Taskbar />
      <HelpDock />
    </div>
  );
}
